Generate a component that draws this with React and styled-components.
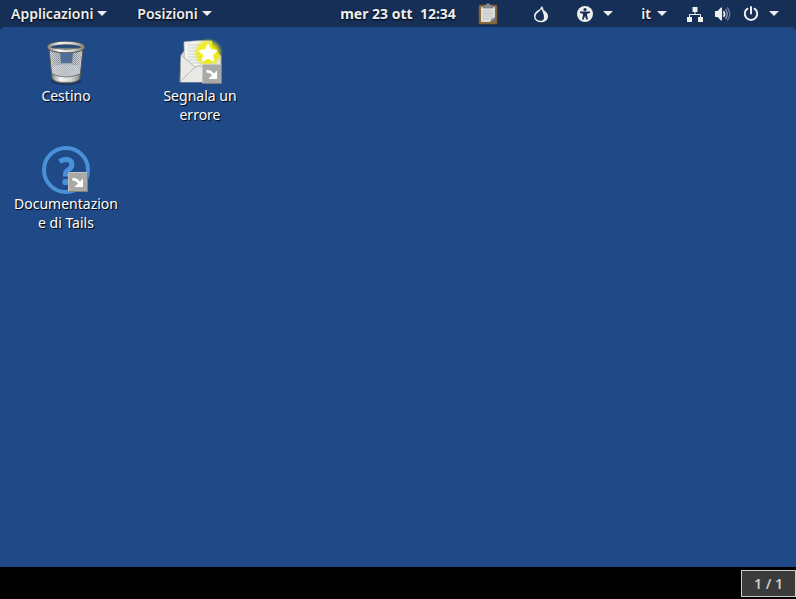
import React from "react";
import styled, { createGlobalStyle } from "styled-components";

const ClipboardIcon = () => (
  <svg width="20" height="22" viewBox="0 0 20 22" aria-hidden="true">
    <rect x="1" y="2" width="18" height="19" rx="1" fill="#8c6c3c" stroke="#6b5230" strokeWidth="0.6" />
    <path d="M3 4h14v15H3z" fill="#dcdddb" />
    <path d="M5 8h9M5 10.5h10M5 13h9M5 15.5h6" stroke="#c3c5c3" strokeWidth="1" />
    <path d="M17 14.500V19h-5.500z" fill="#6d706d" />
    <path d="M12 19l1-4 4-.5z" fill="#a5a8a5" />
    <path d="M5 5V2.500h2.500Q8 .5 10 .5t2.500 2H15V5z" fill="#8b8f92" stroke="#686c6e" strokeWidth="0.6" />
  </svg>
);

const OnionIcon = () => (
  <svg width="16" height="18" viewBox="0 0 16 18" aria-hidden="true">
    <path
      d="M9 1.500C8.600 4 7.500 4.800 5.500 6 3.300 7.400 1.700 8.900 1.700 11.300c0 3.300 2.800 5.200 6.300 5.200s6.300-1.900 6.300-5.200c0-2.500-1.500-3.800-3.500-5.100C9.600 5.400 9 4.400 9.500 2.500"
      fill="none"
      stroke="#eeeeec"
      strokeWidth="1.500"
    />
    <path d="M9.500 5C9.300 7.500 11 8.500 11 12c0 2-1 3.500-2.500 4.500 3.800 0 6-2 6-5.200 0-3.500-4-4.300-5-6.300z" fill="#eeeeec" />
  </svg>
);

const AccessIcon = () => (
  <svg width="16" height="16" viewBox="0 0 16 16" aria-hidden="true">
    <circle cx="8" cy="8" r="8" fill="#eeeeec" />
    <circle cx="8" cy="3.500" r="1.600" fill="#152f57" />
    <path d="M3 5.500h10V7l-3 .7V9l1 4.500H9.300L8 10l-1.300 3.500H5L6 9V7.700L3 7z" fill="#152f57" />
  </svg>
);

const NetworkIcon = () => (
  <svg width="16" height="16" viewBox="0 0 16 16" aria-hidden="true">
    <path d="M5.500 1h5v5h-5zM0 11h5v5H0zM11 11h5v5h-5z" fill="#eeeeec" />
    <path d="M8 5v3.500M2.500 11V8.500h11V11" fill="none" stroke="#eeeeec" strokeWidth="1" />
  </svg>
);

const VolumeIcon = () => (
  <svg width="16" height="16" viewBox="0 0 16 16" aria-hidden="true">
    <path d="M0 5h2.500L6 1.500h1v13H6L2.500 11H0z" fill="#eeeeec" />
    <path d="M8.500 5.200q2.200 2.800 0 5.600" fill="none" stroke="#eeeeec" strokeWidth="1.700" />
    <path d="M10.500 3.200q3.500 4.800 0 9.600" fill="none" stroke="#8796ad" strokeWidth="1.400" />
    <path d="M12.300 1.500q5 6.500 0 13" fill="none" stroke="#687c9b" strokeWidth="1.400" />
  </svg>
);

const PowerIcon = () => (
  <svg width="16" height="16" viewBox="0 0 16 16" aria-hidden="true">
    <path
      d="M4.500 2.700a6.200 6.200 0 1 0 7 0M8 1v6.500"
      fill="none"
      stroke="#eeeeec"
      strokeWidth="2"
      strokeLinecap="round"
    />
  </svg>
);

const TrashIcon = () => (
  <svg width="48" height="48" viewBox="0 0 48 48" aria-hidden="true">
    <defs>
      <linearGradient id="bin" x1="0" x2="1">
        <stop offset="0" stopColor="#dfe0de" />
        <stop offset="0.25" stopColor="#c3c7ca" />
        <stop offset="0.5" stopColor="#a9b4c2" />
        <stop offset="0.75" stopColor="#bfc4c8" />
        <stop offset="1" stopColor="#e2e3e1" />
      </linearGradient>
      <linearGradient id="steel" x1="0" x2="1">
        <stop offset="0" stopColor="#8f918e" />
        <stop offset="0.3" stopColor="#f4f4f3" />
        <stop offset="0.7" stopColor="#d3d5d2" />
        <stop offset="1" stopColor="#888a86" />
      </linearGradient>
      <pattern id="mesh" width="2" height="2" patternUnits="userSpaceOnUse">
        <rect width="1" height="1" fill="#555f6b" />
        <rect x="1" y="1" width="1" height="1" fill="#67717d" />
      </pattern>
    </defs>
    <ellipse cx="24" cy="43" rx="15" ry="4" fill="#1b3457" />
    <path d="M7 10l3 30q1 5 14 5t14-5l3-30z" fill="url(#bin)" stroke="#555753" />
    <path d="M18 14h13l-1 11H19z" fill="#4c70a5" />
    <path d="M8 11q16 5 32 0l-3 27q-13 5-26 0z" fill="url(#mesh)" opacity="0.5" />
    <path d="M11 28q13-4 26 0l-1 10q-12 5-24 0z" fill="#d3d7db" opacity="0.6" />
    <path d="M10 36q14 6 28 0l-.5 4.500Q36 44.500 24 44.500T10.500 40.500z" fill="url(#steel)" stroke="#555753" strokeWidth="0.7" />
    <ellipse cx="24" cy="9" rx="17" ry="4" fill="none" stroke="#555753" strokeWidth="4" />
    <ellipse cx="24" cy="9" rx="17" ry="4" fill="none" stroke="url(#steel)" strokeWidth="2.500" />
  </svg>
);

const ShortcutEmblem = () => (
  <g>
    <rect x="26.500" y="26.500" width="19" height="19" rx="1" fill="#a9aaa5" stroke="#c5c6c2" />
    <path d="M26.500 45.500h19v-19" fill="none" stroke="#80827d" />
    <path d="M30.500 33.500q4.500-.5 7 4" fill="none" stroke="#fff" strokeWidth="2.800" />
    <path d="M41 32.500V41h-8.500z" fill="#fff" />
  </g>
);

const ReportIcon = () => (
  <svg width="48" height="48" viewBox="0 0 48 48" aria-hidden="true">
    <defs>
      <radialGradient id="glow">
        <stop offset="0.45" stopColor="#f6f000" />
        <stop offset="0.7" stopColor="#eae600" stopOpacity="0.7" />
        <stop offset="1" stopColor="#e0e000" stopOpacity="0" />
      </radialGradient>
    </defs>
    <path d="M5 17l4-5h30l6 6v26H4z" fill="#d7d8d5" stroke="#a2a5a0" />
    <path d="M8 4q14-2 28-1v27H9z" fill="#f2f2f0" stroke="#c4c6c2" strokeWidth="0.7" />
    <path d="M12 7h11M12 10h8M12 13h9M12 16h11M12 19h16M12 22h17M13 25h13" stroke="#d2d3d0" strokeWidth="1" />
    <path d="M5 17l13 12 5-1 21-10v26H5z" fill="#e9eae7" />
    <path d="M5 17l14 12L5 43M19 29l5-1.500 8 6" fill="none" stroke="#b4b7b2" strokeWidth="1" />
    <circle cx="32" cy="15" r="15" fill="url(#glow)" />
    <path
      d="M32 6.500l2.600 5.300 5.900.9-4.300 4.100 1 5.800-5.200-2.700-5.200 2.700 1-5.800-4.300-4.100 5.900-.9z"
      fill="#fff"
      stroke="#fff"
      strokeWidth="1.500"
      strokeLinejoin="round"
    />
    <ShortcutEmblem />
  </svg>
);

const HelpIcon = () => (
  <svg width="48" height="48" viewBox="0 0 48 48" aria-hidden="true">
    <circle cx="24" cy="24" r="22" fill="none" stroke="#4a90d9" strokeWidth="4" />
    <path d="M17.500 15.500q3-2 6.500-2 6 0 6 5 0 3-3.500 5.200T23.500 29v1.500" fill="none" stroke="#4a90d9" strokeWidth="5" />
    <circle cx="23.500" cy="36" r="3.200" fill="#4a90d9" />
    <ShortcutEmblem />
  </svg>
);

const shortcuts = [
  { id: "trash", label: "Cestino", icon: <TrashIcon /> },
  { id: "report", label: "Segnala un errore", icon: <ReportIcon /> },
  { id: "docs", label: "Documentazione di Tails", icon: <HelpIcon /> },
];

const App = () => {
  return (
    <StScreen>
      <GlobalStyle />
      <StTopBar>
        <StMenus>
          <StBarButton aria-haspopup="menu" $gap="4px">
            Applicazioni
            <StArrow />
          </StBarButton>
          <StBarButton aria-haspopup="menu" $gap="4px">
            Posizioni
            <StArrow />
          </StBarButton>
        </StMenus>
        <StClock>mer 23 ott&nbsp; 12:34</StClock>
        <StTray>
          <StBarButton aria-label="Appunti">
            <ClipboardIcon />
          </StBarButton>
          <StStatus>
            <StBarButton aria-label="Tor">
              <OnionIcon />
            </StBarButton>
            <StBarButton aria-label="Accesso universale" aria-haspopup="menu" $gap="10px">
              <AccessIcon />
              <StArrow />
            </StBarButton>
            <StInputMenus>
              <StBarButton aria-haspopup="menu" $gap="6px">
                it
                <StArrow />
              </StBarButton>
              <StBarButton aria-label="Sistema" aria-haspopup="menu" $gap="10px">
                <StIcons>
                  <NetworkIcon />
                  <VolumeIcon />
                  <PowerIcon />
                </StIcons>
                <StArrow />
              </StBarButton>
            </StInputMenus>
          </StStatus>
        </StTray>
      </StTopBar>
      <StDesktop>
        {shortcuts.map((item) => (
          <StShortcut key={item.id}>
            {item.icon}
            <StLabel>{item.label}</StLabel>
          </StShortcut>
        ))}
      </StDesktop>
      <StBottomBar>
        <StPager>1 / 1</StPager>
      </StBottomBar>
    </StScreen>
  );
};

export default App;

const GlobalStyle = createGlobalStyle`
  * {
    box-sizing: border-box;
  }

  body {
    margin: 0;
    background-color: #000;
    font-family: "Noto Sans", "Open Sans", sans-serif;
  }

  svg {
    flex: none;
  }
`;

const StButton = styled.button`
  padding: 0;
  border: 0;
  background: none;
  color: inherit;
  font: inherit;
  text-shadow: inherit;
  cursor: pointer;
`;

const StScreen = styled.div`
  min-height: 100vh;
  display: flex;
  flex-direction: column;
  background-color: #152f57;
`;

const StTopBar = styled.header`
  height: 27px;
  display: grid;
  grid-template-columns: 1fr auto 1fr;
  align-items: center;
  color: #eeeeec;
  font-size: 14px;
  font-weight: 600;
  line-height: 20px;
  text-shadow: 0 1px 2px #000;
  white-space: nowrap;
`;

const StMenus = styled.nav`
  padding-left: 11px;
  display: flex;
  gap: 30px;
`;

const StBarButton = styled(StButton)`
  display: flex;
  align-items: center;
  gap: ${({ $gap }) => $gap || 0};
`;

const StArrow = styled.span`
  border: 5px solid transparent;
  border-top-color: #eeeeec;
  border-bottom: 0;
`;

const StClock = styled(StButton)`
  font-weight: 700;
`;

const StTray = styled.div`
  padding: 0 17px 0 22px;
  display: flex;
  align-items: center;
  justify-content: space-between;
`;

const StStatus = styled.div`
  display: flex;
  align-items: center;
  gap: 28px;
`;

const StInputMenus = styled.div`
  display: flex;
  gap: 20px;
`;

const StIcons = styled.span`
  display: flex;
  gap: 12px;
`;

const StDesktop = styled.main`
  flex: 1;
  padding-top: 11px;
  display: grid;
  grid-template-columns: repeat(2, 132px);
  grid-auto-rows: 108px;
  column-gap: 2px;
  align-content: start;
  background-color: #204a87;
  border-radius: 5px 5px 0 0;
`;

const StShortcut = styled(StButton)`
  display: flex;
  flex-direction: column;
  align-items: center;
  justify-content: flex-start;
`;

const StLabel = styled.span`
  width: 108px;
  color: #fff;
  font-size: 14px;
  line-height: 19px;
  text-align: center;
  text-shadow: 1px 1px 1px #000;
  overflow-wrap: anywhere;
`;

const StBottomBar = styled.footer`
  height: 32px;
  padding-bottom: 2px;
  display: flex;
  align-items: flex-end;
  justify-content: flex-end;
  background-color: #000;
`;

const StPager = styled(StButton)`
  width: 55px;
  height: 27px;
  border: 1px solid #ccc;
  background-color: #3b3b3b;
  color: #ccc;
  font-size: 14px;
  font-weight: 600;
`;
